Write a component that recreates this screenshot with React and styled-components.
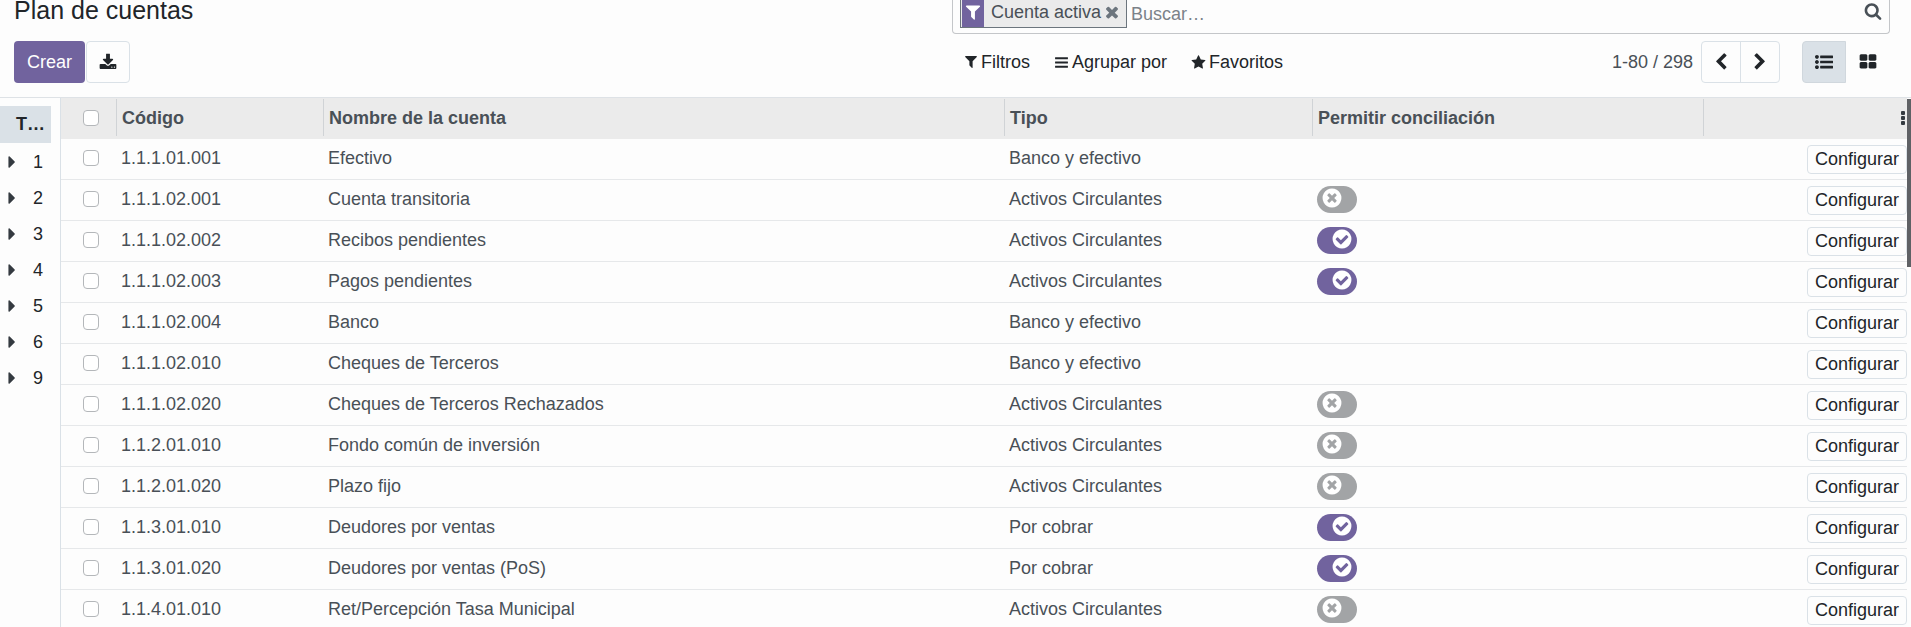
import React from "react";
import styled, { createGlobalStyle } from "styled-components";

const icons = {
  download:
    "M1344 1344q0-26-19-45t-45-19-45 19-19 45 19 45 45 19 45-19 19-45zm256 0q0-26-19-45t-45-19-45 19-19 45 19 45 45 19 45-19 19-45zm128-224v320q0 40-28 68t-68 28h-1472q-40 0-68-28t-28-68v-320q0-40 28-68t68-28h465l135 136q58 56 136 56t136-56l136-136h464q40 0 68 28t28 68zm-325-569q17 41-14 70l-448 448q-18 19-45 19t-45-19l-448-448q-31-29-14-70 17-39 59-39h256v-448q0-26 19-45t45-19h256q26 0 45 19t19 45v448h256q42 0 59 39z",
  filter:
    "M1595 295q17 41-14 70l-493 493v742q0 42-39 59-13 5-25 5-27 0-45-19l-256-256q-19-19-19-45v-486l-493-493q-31-29-14-70 17-39 59-39h1280q42 0 59 39z",
  times:
    "M1490 1322q0 40-28 68l-136 136q-28 28-68 28t-68-28l-294-294-294 294q-28 28-68 28t-68-28l-136-136q-28-28-28-68t28-68l294-294-294-294q-28-28-28-68t28-68l136-136q28-28 68-28t68 28l294 294 294-294q28-28 68-28t68 28l136 136q28 28 28 68t-28 68l-294 294 294 294q28 28 28 68z",
  bars: "M1664 1344v128q0 26-19 45t-45 19h-1408q-26 0-45-19t-19-45v-128q0-26 19-45t45-19h1408q26 0 45 19t19 45zm0-512v128q0 26-19 45t-45 19h-1408q-26 0-45-19t-19-45v-128q0-26 19-45t45-19h1408q26 0 45 19t19 45zm0-512v128q0 26-19 45t-45 19h-1408q-26 0-45-19t-19-45v-128q0-26 19-45t45-19h1408q26 0 45 19t19 45z",
  star: "M1728 647q0 22-26 48l-363 354 86 500q1 7 1 20 0 21-10.5 35.5t-30.5 14.5q-19 0-40-12l-449-236-449 236q-22 12-40 12-21 0-31.5-14.5t-10.5-35.5q0-6 2-20l86-500-364-354q-25-27-25-48 0-37 56-46l502-73 225-455q19-41 49-41t49 41l225 455 502 73q56 9 56 46z",
  search:
    "M1216 832q0-185-131.5-316.5t-316.5-131.5-316.5 131.5-131.5 316.5 131.5 316.5 316.5 131.5 316.5-131.5 131.5-316.5zm512 832q0 52-38 90t-90 38q-54 0-90-38l-343-342q-179 124-399 124-143 0-273.5-55.5t-225-150-150-225-55.5-273.5 55.5-273.5 150-225 225-150 273.5-55.5 273.5 55.5 225 150 150 225 55.5 273.5q0 220-124 399l343 343q37 37 37 90z",
  left: "M1427 301l-531 531 531 531q19 19 19 45t-19 45l-166 166q-19 19-45 19t-45-19l-742-742q-19-19-19-45t19-45l742-742q19-19 45-19t45 19l166 166q19 19 19 45t-19 45z",
  right:
    "M1363 877l-742 742q-19 19-45 19t-45-19l-166-166q-19-19-19-45t19-45l531-531-531-531q-19-19-19-45t19-45l166-166q19-19 45-19t45 19l742 742q19 19 19 45t-19 45z",
  list: "M384 1408q0 80-56 136t-136 56-136-56-56-136 56-136 136-56 136 56 56 136zm0-512q0 80-56 136t-136 56-136-56-56-136 56-136 136-56 136 56 56 136zm0-512q0 80-56 136t-136 56-136-56-56-136 56-136 136-56 136 56 56 136zM544 1280h1216q32 0 32 32v192q0 32-32 32h-1216q-32 0-32-32v-192q0-32 32-32zM544 768h1216q32 0 32 32v192q0 32-32 32h-1216q-32 0-32-32v-192q0-32 32-32zM544 256h1216q32 0 32 32v192q0 32-32 32h-1216q-32 0-32-32v-192q0-32 32-32z",
  kanban:
    "M832 1024v384q0 52-38 90t-90 38h-512q-52 0-90-38t-38-90v-384q0-52 38-90t90-38h512q52 0 90 38t38 90zm0-768v384q0 52-38 90t-90 38h-512q-52 0-90-38t-38-90v-384q0-52 38-90t90-38h512q52 0 90 38t38 90zm896 768v384q0 52-38 90t-90 38h-512q-52 0-90-38t-38-90v-384q0-52 38-90t90-38h512q52 0 90 38t38 90zm0-768v384q0 52-38 90t-90 38h-512q-52 0-90-38t-38-90v-384q0-52 38-90t90-38h512q52 0 90 38t38 90z",
  caret:
    "M1152 896q0 26-19 45l-448 448q-19 19-45 19t-45-19-19-45v-896q0-26 19-45t45-19 45 19l448 448q19 19 19 45z",
  on: "M1412 734q0-28-18-46l-91-90q-19-19-45-19t-45 19l-408 407-226-226q-19-19-45-19t-45 19l-91 90q-18 18-18 46 0 27 18 45l362 362q19 19 45 19 27 0 46-19l543-543q18-18 18-45zm252 162q0 209-103 385.5t-279.5 279.5-385.5 103-385.5-103-279.5-279.5-103-385.5 103-385.5 279.5-279.5 385.5-103 385.5 103 279.5 279.5 103 385.5z",
  off: "M1277 1122q0-26-19-45l-181-181 181-181q19-19 19-45 0-27-19-46l-90-90q-19-19-46-19-26 0-45 19l-181 181-181-181q-19-19-45-19-27 0-46 19l-90 90q-19 19-19 46 0 26 19 45l181 181-181 181q-19 19-19 45 0 27 19 46l90 90q19 19 46 19 26 0 45-19l181-181 181 181q19 19 45 19 27 0 46-19l90-90q19-19 19-46zm387-226q0 209-103 385.5t-279.5 279.5-385.5 103-385.5-103-279.5-279.5-103-385.5 103-385.5 279.5-279.5 385.5-103 385.5 103 279.5 279.5 103 385.5z",
};

const accounts = [
  { code: "1.1.1.01.001", name: "Efectivo", type: "Banco y efectivo" },
  { code: "1.1.1.02.001", name: "Cuenta transitoria", type: "Activos Circulantes", reconcile: false },
  { code: "1.1.1.02.002", name: "Recibos pendientes", type: "Activos Circulantes", reconcile: true },
  { code: "1.1.1.02.003", name: "Pagos pendientes", type: "Activos Circulantes", reconcile: true },
  { code: "1.1.1.02.004", name: "Banco", type: "Banco y efectivo" },
  { code: "1.1.1.02.010", name: "Cheques de Terceros", type: "Banco y efectivo" },
  { code: "1.1.1.02.020", name: "Cheques de Terceros Rechazados", type: "Activos Circulantes", reconcile: false },
  { code: "1.1.2.01.010", name: "Fondo común de inversión", type: "Activos Circulantes", reconcile: false },
  { code: "1.1.2.01.020", name: "Plazo fijo", type: "Activos Circulantes", reconcile: false },
  { code: "1.1.3.01.010", name: "Deudores por ventas", type: "Por cobrar", reconcile: true },
  { code: "1.1.3.01.020", name: "Deudores por ventas (PoS)", type: "Por cobrar", reconcile: true },
  { code: "1.1.4.01.010", name: "Ret/Percepción Tasa Municipal", type: "Activos Circulantes", reconcile: false },
];

const groups = ["1", "2", "3", "4", "5", "6", "9"];

const Icon = ({ name, size = 18, box = "0 0 1792 1792" }) => (
  <Svg viewBox={box} $size={size} aria-hidden="true">
    <path d={icons[name]} />
  </Svg>
);

const Toggle = ({ checked, label }) => (
  <Switch $on={checked}>
    <input type="checkbox" role="switch" defaultChecked={checked} aria-label={label} />
    <Icon name={checked ? "on" : "off"} size={22} />
  </Switch>
);

const ControlPanel = () => (
  <Panel>
    <Title>Plan de cuentas</Title>
    <SearchBox>
      <Facet>
        <FacetIcon>
          <Icon name="filter" />
        </FacetIcon>
        <span>Cuenta activa</span>
        <FacetRemove type="button" aria-label="Eliminar">
          <Icon name="times" />
        </FacetRemove>
      </Facet>
      <SearchInput type="text" placeholder="Buscar…" aria-label="Buscar" />
      <SearchButton type="button" aria-label="Buscar">
        <Icon name="search" />
      </SearchButton>
    </SearchBox>
    <Actions>
      <PrimaryButton type="button">Crear</PrimaryButton>
      <ExportButton type="button" aria-label="Exportar">
        <Icon name="download" box="0 0 1792 1664" />
      </ExportButton>
    </Actions>
    <Tools>
      <FilterMenu>
        <MenuButton type="button">
          <Icon name="filter" size={14} box="192 128 1408 1664" />
          Filtros
        </MenuButton>
        <MenuButton type="button">
          <Icon name="bars" size={15} />
          Agrupar por
        </MenuButton>
        <MenuButton type="button">
          <Icon name="star" size={15} />
          Favoritos
        </MenuButton>
      </FilterMenu>
      <Pager>
        <span>1-80 / 298</span>
        <PagerButtons>
          <button type="button" aria-label="Anterior">
            <Icon name="left" />
          </button>
          <button type="button" aria-label="Siguiente">
            <Icon name="right" />
          </button>
        </PagerButtons>
      </Pager>
      <ViewSwitcher>
        <ViewButton type="button" $active aria-label="Lista">
          <Icon name="list" />
        </ViewButton>
        <ViewButton type="button" aria-label="Kanban">
          <Icon name="kanban" />
        </ViewButton>
      </ViewSwitcher>
    </Tools>
  </Panel>
);

const AccountTable = () => (
  <Table>
    <colgroup>
      <Col $width="56px" />
      <Col $width="207px" />
      <Col />
      <Col $width="308px" />
      <Col $width="391px" />
      <Col $width="203px" />
    </colgroup>
    <thead>
      <tr>
        <Th>
          <HeadCell $center>
            <Checkbox type="checkbox" aria-label="Seleccionar todo" />
          </HeadCell>
        </Th>
        <Th>
          <HeadCell>Código</HeadCell>
        </Th>
        <Th>
          <HeadCell>Nombre de la cuenta</HeadCell>
        </Th>
        <Th>
          <HeadCell>Tipo</HeadCell>
        </Th>
        <Th>
          <HeadCell>Permitir conciliación</HeadCell>
        </Th>
        <Th>
          <OptionsButton type="button" aria-label="Columnas opcionales">
            <svg width="4" height="14" viewBox="0 0 4 14" aria-hidden="true">
              <rect width="4" height="4" rx="1" />
              <rect y="5" width="4" height="4" rx="1" />
              <rect y="10" width="4" height="4" rx="1" />
            </svg>
          </OptionsButton>
        </Th>
      </tr>
    </thead>
    <tbody>
      {accounts.map(({ code, name, type, reconcile }) => (
        <tr key={code}>
          <CheckCell>
            <Checkbox type="checkbox" aria-label={`Seleccionar ${code}`} />
          </CheckCell>
          <Td>{code}</Td>
          <Td>{name}</Td>
          <Td>{type}</Td>
          <Td>
            {reconcile !== undefined && (
              <Toggle checked={reconcile} label={`Permitir conciliación ${code}`} />
            )}
          </Td>
          <ButtonCell>
            <SetupButton type="button">Configurar</SetupButton>
          </ButtonCell>
        </tr>
      ))}
    </tbody>
  </Table>
);

const App = () => {
  return (
    <Wrapper>
      <GlobalStyle />
      <ControlPanel />
      <Content>
        <Sidebar>
          <AllGroups type="button">T…</AllGroups>
          {groups.map((group) => (
            <GroupButton type="button" key={group}>
              <Icon name="caret" size={20} />
              {group}
            </GroupButton>
          ))}
        </Sidebar>
        <ListArea>
          <AccountTable />
        </ListArea>
        <Scrollbar>
          <Thumb />
        </Scrollbar>
      </Content>
    </Wrapper>
  );
};

const GlobalStyle = createGlobalStyle`
  :root {
    --clr-primary: #71639e;
    --clr-text: #495057;
    --clr-dark: #212529;
    --clr-border: #dae1e7;
    --clr-line: #e6e8ea;
    --clr-head: #ebebeb;
    --clr-bg: #fdfdfd;
  }
  * {
    box-sizing: border-box;
  }
  body {
    margin: 0;
    color: var(--clr-text);
    background-color: var(--clr-bg);
    font: 18px/27px "Liberation Sans", Arial, sans-serif;
  }
  button,
  input {
    margin: 0;
    padding: 0;
    font: inherit;
    color: inherit;
    border: 0;
    background: none;
  }
`;

const Wrapper = styled.div`
  height: 100vh;
  display: flex;
  overflow: hidden;
  flex-direction: column;
`;

const Svg = styled.svg`
  flex: none;
  width: ${({ $size }) => $size}px;
  height: ${({ $size }) => $size}px;
  fill: currentColor;
`;

/* ======================================= */
/* Control panel */
const Panel = styled.header`
  display: grid;
  grid-template-columns: 1fr 1fr;
  grid-template-rows: 34px 42px;
  row-gap: 7px;
  padding: 0 21px 14px 14px;
  border-bottom: 1px solid #dee2e6;
`;

const Title = styled.h1`
  margin: 0;
  font-size: 25px;
  font-weight: 400;
  line-height: 20px;
  color: var(--clr-dark);
`;

const SearchBox = styled.div`
  display: flex;
  padding: 0 7px;
  border: 1px solid #c4c6c9;
  border-top: 0;
  border-radius: 0 0 4px 4px;
`;

const Facet = styled.div`
  height: 28px;
  display: flex;
  line-height: 24px;
  padding: 0 5px 0 1px;
  border: 1px solid #6c757d;
  border-top: 0;
  background-color: var(--clr-head);
`;

const FacetIcon = styled.span`
  width: 22px;
  display: flex;
  margin-right: 7px;
  padding-top: 3px;
  color: #fff;
  justify-content: center;
  background-color: var(--clr-primary);
`;

const FacetRemove = styled.button`
  display: flex;
  margin-left: 2px;
  padding-top: 3px;
  color: #6c757d;
`;

const SearchInput = styled.input`
  flex: 1;
  min-width: 0;
  height: 28px;
  padding-left: 4px;
  outline: none;
  &::placeholder {
    color: #7b8289;
    opacity: 1;
  }
`;

const SearchButton = styled.button`
  display: flex;
  padding-top: 2px;
`;

const Actions = styled.div`
  gap: 1px;
  display: flex;
`;

const PrimaryButton = styled.button`
  padding: 0 13px;
  color: #fff;
  border-radius: 4px;
  background-color: var(--clr-primary);
`;

const ExportButton = styled.button`
  width: 44px;
  display: flex;
  align-items: center;
  justify-content: center;
  color: var(--clr-dark);
  border: 1px solid var(--clr-border);
  border-radius: 4px;
`;

const Tools = styled.div`
  display: flex;
`;

const FilterMenu = styled.div`
  flex: 1;
  display: flex;
`;

const MenuButton = styled.button`
  gap: 3px;
  display: flex;
  padding: 0 12px;
  align-items: center;
  color: var(--clr-dark);
`;

const Pager = styled.div`
  gap: 8px;
  display: flex;
  align-items: center;
`;

const PagerButtons = styled.div`
  height: 42px;
  display: flex;
  border: 1px solid var(--clr-border);
  border-radius: 4px;
  button {
    width: 38px;
    display: flex;
    align-items: center;
    justify-content: center;
    color: var(--clr-dark);
  }
  button + button {
    width: 39px;
    border-left: 1px solid var(--clr-border);
  }
`;

const ViewSwitcher = styled.div`
  display: flex;
  margin-left: 22px;
`;

const ViewButton = styled.button`
  width: 44px;
  display: flex;
  align-items: center;
  justify-content: center;
  color: var(--clr-dark);
  border-radius: 4px 0 0 4px;
  border: 1px solid ${({ $active }) => ($active ? "#d0d7dd" : "transparent")};
  background-color: ${({ $active }) => ($active ? "var(--clr-border)" : "transparent")};
`;

/* ======================================= */
/* Groups on the left */
const Content = styled.main`
  flex: 1;
  display: flex;
  min-height: 0;
`;

const Sidebar = styled.aside`
  width: 61px;
  display: flex;
  flex: none;
  flex-direction: column;
  padding: 8px 9px 0 0;
  border-right: 1px solid var(--clr-border);
`;

const AllGroups = styled.button`
  height: 37px;
  margin-bottom: 1px;
  padding: 0 0 0 16px;
  font-weight: 700;
  text-align: left;
  color: var(--clr-dark);
  background-color: var(--clr-border);
`;

const GroupButton = styled.button`
  gap: 11px;
  height: 36px;
  display: flex;
  padding-left: 2px;
  align-items: center;
  color: var(--clr-dark);
  svg {
    color: #343a40;
  }
`;

/* ======================================= */
/* List */
const ListArea = styled.section`
  flex: 1;
  min-width: 0;
  overflow: hidden;
`;

const Table = styled.table`
  width: 100%;
  table-layout: fixed;
  border-spacing: 0;
`;

const Col = styled.col`
  width: ${({ $width }) => $width || "auto"};
`;

const Th = styled.th`
  height: 41px;
  padding: 1px 0 3px;
  text-align: left;
  background-color: var(--clr-head);
`;

const HeadCell = styled.div`
  height: 37px;
  display: flex;
  align-items: center;
  padding-top: 1px;
  padding-left: ${({ $center }) => ($center ? "22px" : "5px")};
  border-right: 1px solid #d0d3d6;
`;

const OptionsButton = styled.button`
  display: flex;
  margin-left: auto;
  padding-right: 2px;
  svg {
    fill: #343a40;
  }
`;

const Td = styled.td`
  height: 41px;
  padding: 0 4px 2px;
  border-bottom: 1px solid var(--clr-line);
`;

const CheckCell = styled(Td)`
  padding: 0 0 2px 22px;
`;

const ButtonCell = styled(Td)`
  padding: 0;
`;

const Checkbox = styled.input`
  width: 16px;
  height: 16px;
  display: block;
  appearance: none;
  border: 1px solid #b4b7ba;
  border-radius: 4px;
  background-color: #fff;
`;

const Switch = styled.label`
  width: 40px;
  height: 27px;
  display: flex;
  padding: 1px 4px 3px;
  color: #fff;
  border-radius: 14px;
  justify-content: ${({ $on }) => ($on ? "flex-end" : "flex-start")};
  background-color: ${({ $on }) => ($on ? "var(--clr-primary)" : "#a2a4a6")};
  input {
    width: 0;
    height: 0;
    appearance: none;
  }
`;

const SetupButton = styled.button`
  display: block;
  margin-left: auto;
  padding: 0 7px;
  color: var(--clr-dark);
  border: 1px solid var(--clr-border);
  border-radius: 4px;
`;

const Scrollbar = styled.div`
  width: 4px;
  flex: none;
  padding-top: 1px;
`;

const Thumb = styled.div`
  height: 168px;
  background-color: #5f6165;
`;

export default App;
